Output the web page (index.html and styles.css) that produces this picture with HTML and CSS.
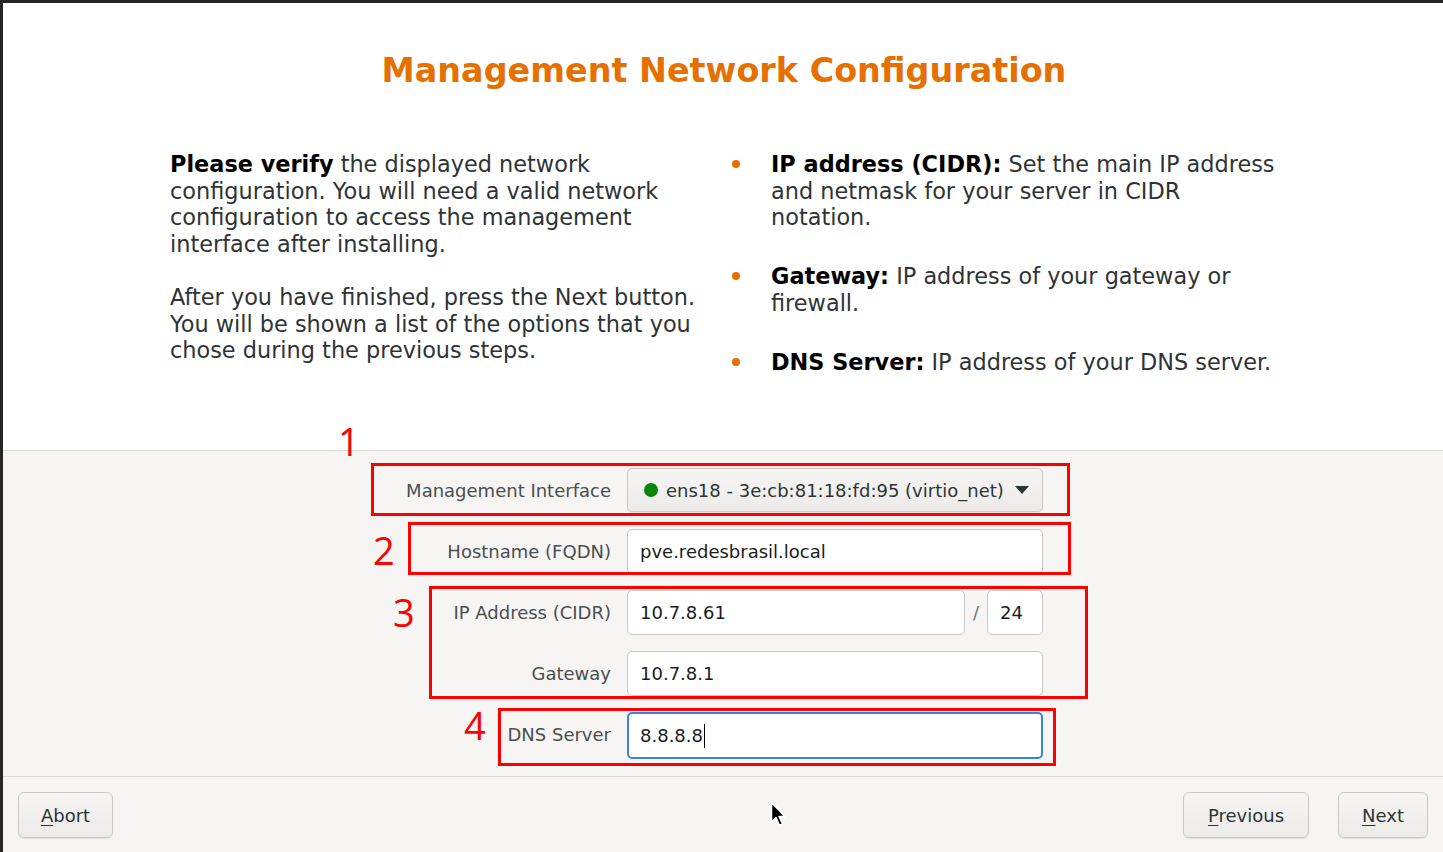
FILE: index.html
```html
<!DOCTYPE html>
<html lang="en">
<head>
<meta charset="utf-8">
<title>Management Network Configuration</title>
<link rel="stylesheet" href="styles.css">
</head>
<body>
<div class="window">
  <header class="header">
    <h1 class="title">Management Network Configuration</h1>
    <div class="columns">
      <div class="col-left">
        <p class="para"><b>Please verify</b> the displayed network<br>configuration. You will need a valid network<br>configuration to access the management<br>interface after installing.</p>
        <p class="para">After you have finished, press the Next button.<br>You will be shown a list of the options that you<br>chose during the previous steps.</p>
      </div>
      <ul class="col-right">
        <li class="item"><b>IP address (CIDR):</b> Set the main IP address<br>and netmask for your server in CIDR<br>notation.</li>
        <li class="item"><b>Gateway:</b> IP address of your gateway or<br>firewall.</li>
        <li class="item"><b>DNS Server:</b> IP address of your DNS server.</li>
      </ul>
    </div>
  </header>

  <main class="form">
    <div class="grid">
      <label class="label">Management Interface</label>
      <div class="combo">
        <span class="dot"></span>
        <span class="combo-text">ens18 - 3e:cb:81:18:fd:95 (virtio_net)</span>
        <svg class="arrow" width="14" height="8" viewBox="0 0 14 8"><path d="M0 0 L14 0 L7 8 Z" fill="#2e3436"/></svg>
      </div>

      <label class="label">Hostname (FQDN)</label>
      <div class="entry">pve.redesbrasil.local</div>

      <label class="label">IP Address (CIDR)</label>
      <div class="ip-row">
        <div class="entry entry-grow">10.7.8.61</div>
        <span class="slash">/</span>
        <div class="entry entry-small">24</div>
      </div>

      <label class="label">Gateway</label>
      <div class="entry">10.7.8.1</div>

      <label class="label">DNS Server</label>
      <div class="entry entry-focus">8.8.8.8<span class="caret"></span></div>
    </div>
  </main>

  <footer class="footer">
    <button class="btn btn-abort"><u>A</u>bort</button>
    <div class="footer-right">
      <button class="btn btn-prev"><u>P</u>revious</button>
      <button class="btn btn-next"><u>N</u>ext</button>
    </div>
  </footer>
</div>

<div class="mark mark-1"></div>
<div class="mark mark-2"></div>
<div class="mark mark-3"></div>
<div class="mark mark-4"></div>
<span class="num num-1">1</span>
<span class="num num-2">2</span>
<span class="num num-3">3</span>
<span class="num num-4">4</span>

<svg class="pointer" width="20" height="28" viewBox="0 0 20 28">
  <path d="M1.5 1.5 L1.5 21 L6 16.5 L9.5 24.5 L12.5 23 L9 15.5 L15 15.5 Z" fill="#000" stroke="#fff" stroke-width="1.5" stroke-linejoin="round"/>
</svg>
</body>
</html>
```

FILE: styles.css
```css
html, body {
  margin: 0;
  padding: 0;
}
body {
  width: 1443px;
  height: 852px;
  overflow: hidden;
  background: #262626;
  position: relative;
  font-family: "DejaVu Sans", sans-serif;
}
.window {
  margin: 3px 0 0 3px;
  height: 849px;
  display: flex;
  flex-direction: column;
  background: #ffffff;
}
.header {
  height: 447px;
  flex: none;
  border-bottom: 1px solid #dcd8d4;
  background: #ffffff;
  box-sizing: content-box;
}
.title {
  margin: 48px 0 0 0;
  height: 40px;
  line-height: 40px;
  font-size: 33.4px;
  font-weight: bold;
  color: #e57000;
  text-align: center;
  padding-left: 2px;
}
.columns {
  display: flex;
  margin-top: 60px;
  padding-left: 167px;
  font-size: 22.4px;
  line-height: 26.5px;
  color: #2e3436;
}
.columns b {
  color: #000000;
}
.col-left {
  width: 560px;
  white-space: nowrap;
}
.para {
  margin: 0 0 27px 0;
}
.col-right {
  list-style: none;
  margin: 0;
  padding: 0 0 0 41px;
  white-space: nowrap;
}
.item {
  position: relative;
  margin-bottom: 32.5px;
}
.item::before {
  content: "";
  position: absolute;
  left: -39px;
  top: 9px;
  width: 8px;
  height: 8px;
  border-radius: 50%;
  background: #e57000;
}
.form {
  flex: 1;
  background: #f6f5f4;
  padding-top: 17px;
  box-sizing: border-box;
}
.grid {
  display: grid;
  grid-template-columns: 608px 416px;
  column-gap: 16px;
  row-gap: 16px;
  grid-auto-rows: 45px;
}
.label {
  justify-self: end;
  align-self: center;
  font-size: 18px;
  color: #4a4e50;
}
.combo {
  display: flex;
  align-items: center;
  height: 44px;
  box-sizing: border-box;
  border: 1px solid #cdc7c2;
  border-radius: 5px;
  background: linear-gradient(#f6f5f4, #edebe9);
  box-shadow: 0 1px 1px rgba(0, 0, 0, 0.06);
  padding-left: 16px;
  font-size: 18px;
  color: #2e3436;
}
.dot {
  width: 14px;
  height: 14px;
  border-radius: 50%;
  background: #0a870a;
  margin-right: 8px;
}
.arrow {
  margin-left: 11px;
}
.entry {
  height: 45px;
  box-sizing: border-box;
  border: 1px solid #cdc7c2;
  border-radius: 5px;
  background: #ffffff;
  padding-left: 12px;
  display: flex;
  align-items: center;
  font-size: 18px;
  color: #1a1c1d;
}
.ip-row {
  display: flex;
  align-items: center;
}
.entry-grow {
  width: 338px;
}
.slash {
  width: 22px;
  text-align: center;
  font-size: 18px;
  color: #6f7374;
}
.entry-small {
  width: 56px;
}
.entry-focus {
  height: 47px;
  border: 2px solid #3584e4;
  padding-left: 11px;
}
.caret {
  display: inline-block;
  width: 1px;
  height: 24px;
  background: #000;
  margin-left: 1px;
}
.footer {
  flex: none;
  height: 60px;
  border-top: 1px solid #dcd8d4;
  background: #f6f5f4;
  display: flex;
  justify-content: space-between;
  align-items: flex-start;
  padding: 15px 15px 0 15px;
  box-sizing: content-box;
}
.footer-right {
  display: flex;
  gap: 29px;
}
.btn {
  height: 46px;
  border: 1px solid #cdc7c2;
  border-radius: 6px;
  background: linear-gradient(#f6f5f4, #edebe9);
  box-shadow: 0 1px 1px rgba(0, 0, 0, 0.08);
  font-family: "DejaVu Sans", sans-serif;
  font-size: 18px;
  color: #2e3436;
  padding: 0;
}
.btn u {
  text-decoration-thickness: 1px;
  text-underline-offset: 3px;
}
.btn-abort { width: 95px; }
.btn-prev { width: 126px; }
.btn-next { width: 90px; }

.mark {
  position: absolute;
  border: 3px solid #ff0000;
  box-sizing: border-box;
}
.mark-1 { left: 371px; top: 463px; width: 699px; height: 53px; }
.mark-2 { left: 408px; top: 522px; width: 663px; height: 53px; }
.mark-3 { left: 429px; top: 586px; width: 659px; height: 113px; }
.mark-4 { left: 498px; top: 708px; width: 558px; height: 58px; }

.num {
  position: absolute;
  font-family: "Open Sans", sans-serif;
  font-size: 38px;
  line-height: 38px;
  color: #ff0000;
}
.num-1 { left: 338px; top: 422px; }
.num-2 { left: 373px; top: 531px; }
.num-3 { left: 393px; top: 593px; }
.num-4 { left: 464px; top: 706px; }

.pointer {
  position: absolute;
  left: 770px;
  top: 801px;
}
```
